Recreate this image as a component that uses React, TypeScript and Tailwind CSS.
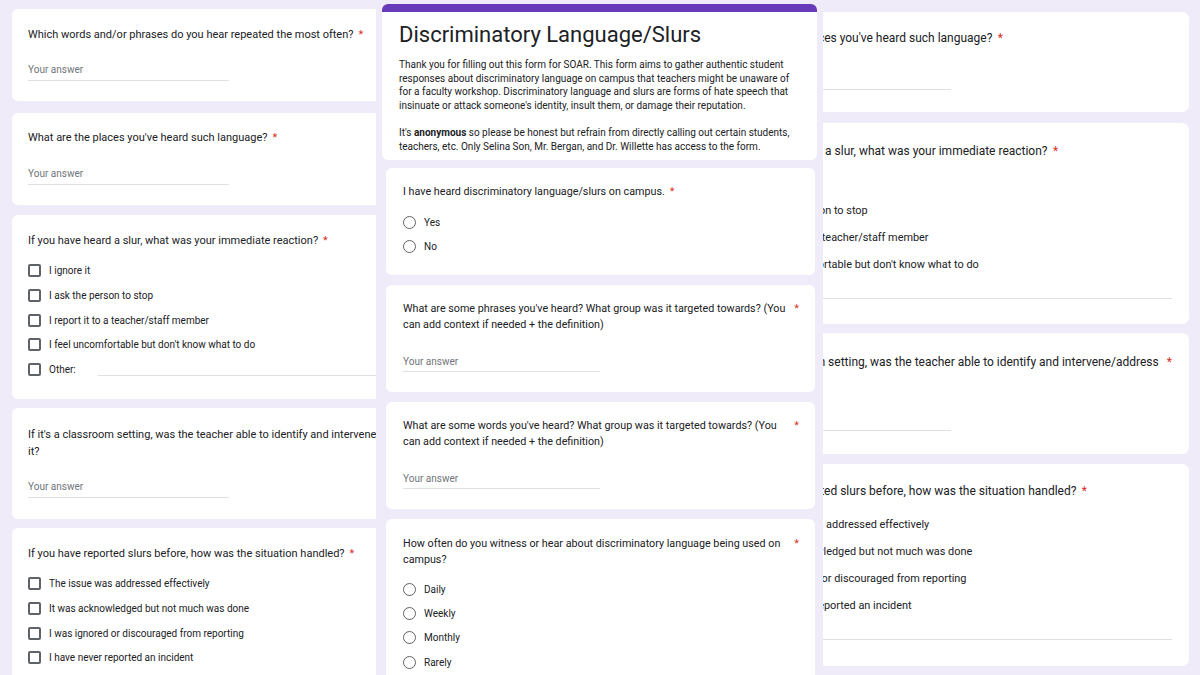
import React from "react";

type Kids = { children: React.ReactNode };

// left/right crops share this form (the right one is just zoomed + scrolled)
const Title = ({ children }: Kids) => (
  <div className="flex text-[11px] leading-[17px] text-[#202124]">
    <span>{children}</span>
    <span className="ml-[5px] shrink-0 text-[#d93025]">*</span>
  </div>
);

const Answer = ({ className }: { className: string }) => (
  <div className={`w-[201px] border-b border-[#e0e0e0] pb-[3px] text-[10px] leading-[14px] text-[#70757a] ${className}`}>
    Your answer
  </div>
);

const Check = ({ label }: { label: string }) => (
  <div className="flex h-[24.7px] items-center gap-[8px] text-[10px] text-[#202124]">
    <span className="h-[13px] w-[13px] shrink-0 rounded-[2px] border-2 border-[#5f6368]" />
    <span>{label}</span>
  </div>
);

const Other = () => (
  <div className="flex h-[24.7px] items-center text-[10px] text-[#202124]">
    <span className="mr-[8px] h-[13px] w-[13px] shrink-0 rounded-[2px] border-2 border-[#5f6368]" />
    <span>Other:</span>
    <span className="ml-[22px] mt-[12px] h-px flex-1 bg-[#e0e0e0]" />
  </div>
);

const SideForm = () => (
  <div className="flex flex-col pl-[12px]">
    <div className="mt-[9px] h-[92px] w-[436px] shrink-0 rounded-[6px] bg-white px-[16px] pt-[17px]">
      <Title>Which words and/or phrases do you hear repeated the most often?</Title>
      <Answer className="mt-[20px]" />
    </div>
    <div className="mt-[12px] h-[92px] w-[436px] shrink-0 rounded-[6px] bg-white px-[16px] pt-[16px]">
      <Title>What are the places you've heard such language?</Title>
      <Answer className="mt-[21px]" />
    </div>
    <div className="mt-[10px] h-[184px] w-[436px] shrink-0 rounded-[6px] bg-white px-[16px] pt-[17px]">
      <Title>If you have heard a slur, what was your immediate reaction?</Title>
      <div className="mt-[9.5px] flex flex-col">
        <Check label="I ignore it" />
        <Check label="I ask the person to stop" />
        <Check label="I report it to a teacher/staff member" />
        <Check label="I feel uncomfortable but don't know what to do" />
        <Other />
      </div>
    </div>
    <div className="mt-[9px] h-[111px] w-[436px] shrink-0 rounded-[6px] bg-white px-[16px] pt-[17.5px]">
      <Title>If it's a classroom setting, was the teacher able to identify and intervene/address it?</Title>
      <Answer className="mt-[20px]" />
    </div>
    <div className="mt-[9px] h-[185px] w-[436px] shrink-0 rounded-[6px] bg-white px-[16px] pt-[16.5px]">
      <Title>If you have reported slurs before, how was the situation handled?</Title>
      <div className="mt-[10px] flex flex-col">
        <Check label="The issue was addressed effectively" />
        <Check label="It was acknowledged but not much was done" />
        <Check label="I was ignored or discouraged from reporting" />
        <Check label="I have never reported an incident" />
        <Other />
      </div>
    </div>
  </div>
);

// center crop
const CTitle = ({ children }: Kids) => (
  <div className="flex text-[10.75px] leading-[16px] text-[#202124]">
    <span>{children}</span>
    <span className="ml-[5px] shrink-0 text-[#d93025]">*</span>
  </div>
);

const Radio = ({ label }: { label: string }) => (
  <div className="flex h-[24.3px] items-center gap-[8px] text-[10px] text-[#202124]">
    <span className="h-[13px] w-[13px] shrink-0 rounded-full border-[1.5px] border-[#5f6368]" />
    <span>{label}</span>
  </div>
);

const CAnswer = () => (
  <div className="mt-[22px] w-[197px] border-b border-[#e0e0e0] pb-[2px] text-[10px] leading-[14px] text-[#70757a]">
    Your answer
  </div>
);

const CenterForm = () => (
  <div className="flex flex-col">
    <div className="ml-[6px] mt-[4px] h-[156px] w-[435px] shrink-0 overflow-hidden rounded-[6px] bg-white">
      <div className="h-[8px] bg-[#673ab7]" />
      <div className="px-[17px] pt-[9px]">
        <h1 className="text-[22px] leading-[28px] text-[#202124]">Discriminatory Language/Slurs</h1>
        <div className="mt-[9px] text-[10px] leading-[13.6px] text-[#202124]">
          <p>
            Thank you for filling out this form for SOAR. This form aims to gather authentic student responses about
            discriminatory language on campus that teachers might be unaware of for a faculty workshop. Discriminatory
            language and slurs are forms of hate speech that insinuate or attack someone's identity, insult them, or
            damage their reputation.
          </p>
          <p className="mt-[13.6px]">
            It's <b className="font-bold">anonymous</b> so please be honest but refrain from directly calling out
            certain students, teachers, etc. Only Selina Son, Mr. Bergan, and Dr. Willette has access to the form.
          </p>
        </div>
      </div>
    </div>

    <div className="ml-[10px] mt-[8px] h-[107px] w-[429px] shrink-0 rounded-[6px] bg-white px-[17px] pt-[16px]">
      <CTitle>I have heard discriminatory language/slurs on campus.</CTitle>
      <div className="mt-[10px] flex flex-col">
        <Radio label="Yes" />
        <Radio label="No" />
      </div>
    </div>

    <div className="ml-[10px] mt-[10px] h-[107px] w-[429px] shrink-0 rounded-[6px] bg-white pl-[17px] pr-[16px] pt-[16px]">
      <CTitle>What are some phrases you've heard? What group was it targeted towards? (You can add context if needed + the definition)</CTitle>
      <CAnswer />
    </div>

    <div className="ml-[10px] mt-[10px] h-[107px] w-[429px] shrink-0 rounded-[6px] bg-white pl-[17px] pr-[16px] pt-[16px]">
      <CTitle>What are some words you've heard? What group was it targeted towards? (You can add context if needed + the definition)</CTitle>
      <CAnswer />
    </div>

    <div className="ml-[10px] mt-[10px] h-[200px] w-[429px] shrink-0 rounded-[6px] bg-white pl-[17px] pr-[16px] pt-[17px]">
      <CTitle>How often do you witness or hear about discriminatory language being used on campus?</CTitle>
      <div className="mt-[9px] flex flex-col">
        <Radio label="Daily" />
        <Radio label="Weekly" />
        <Radio label="Monthly" />
        <Radio label="Rarely" />
      </div>
    </div>
  </div>
);

export default function App() {
  return (
    <div className="flex h-[675px] w-[1200px] overflow-hidden bg-[#f0ebf8] font-['Roboto',sans-serif] text-[#202124]">
      <div className="h-full w-[376px] shrink-0 overflow-hidden">
        <SideForm />
      </div>
      <div className="h-full w-[447px] shrink-0 overflow-hidden">
        <CenterForm />
      </div>
      <div className="h-full flex-1 overflow-hidden">
        <div className="[zoom:1.09]">
          <div className="-ml-[112px] -mt-[102px]">
            <SideForm />
          </div>
        </div>
      </div>
    </div>
  );
}
